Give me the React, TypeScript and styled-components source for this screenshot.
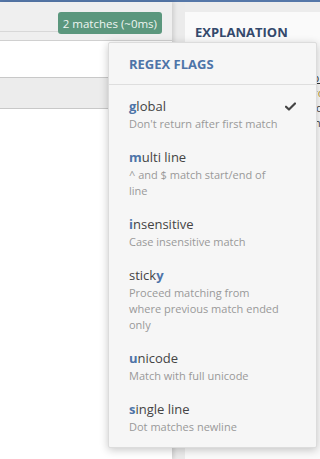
import React from "react";
import styled, { createGlobalStyle } from "styled-components";

const Global = createGlobalStyle`
  html, body { margin: 0; padding: 0; }
  body {
    width: 320px;
    height: 459px;
    overflow: hidden;
    background: #ececec;
    font-family: "Open Sans", "DejaVu Sans", sans-serif;
  }
`;

const Page = styled.div`
  position: relative;
  width: 320px;
  height: 459px;
  display: flex;
  flex-direction: column;
  border-top: 2px solid #5577a8;
  box-sizing: border-box;
`;

const Columns = styled.div`
  flex: 1;
  display: flex;
  min-height: 0;
`;

const LeftPane = styled.div`
  width: 172px;
  display: flex;
  flex-direction: column;
  background: #fff;
  box-shadow: 2px 0 4px rgba(0, 0, 0, 0.12);
  z-index: 1;
`;

const Toolbar = styled.div`
  height: 38px;
  display: flex;
  align-items: flex-start;
  background: #efefef;
  border-bottom: 1px solid #d0d0d0;
  padding-right: 10px;
`;

const ToolbarFill = styled.div`
  flex: 1;
  height: 29px;
  border-bottom: 1px solid #d8d8d8;
`;

const Badge = styled.div`
  margin-top: 10px;
  height: 22px;
  padding: 0 5px;
  display: flex;
  align-items: center;
  background: #5b977d;
  color: #eef5f1;
  font-size: 11.5px;
  border-radius: 3px;
  white-space: nowrap;
`;

const InputRow = styled.div`
  height: 36px;
  background: #fff;
  border-bottom: 1px solid #c8c8c8;
`;

const StripRow = styled.div`
  height: 30px;
  background: #ececec;
  border-bottom: 1px solid #c8c8c8;
`;

const Editor = styled.div`
  flex: 1;
  background: #fff;
`;

const Gutter = styled.div`
  width: 13px;
  background: #ebebeb;
`;

const RightPane = styled.div`
  flex: 1;
  margin-top: 10px;
  background: #fafafa;
  padding: 11px 0 0 10px;
  overflow: hidden;
`;

const Heading = styled.div`
  font-size: 13px;
  font-weight: 700;
  color: #34496c;
`;

const ExplainBlock = styled.div`
  margin-top: 14px;
  padding-left: 20px;
`;

const ExplainLine = styled.div<{ $color: string; $under?: boolean }>`
  font-size: 11px;
  line-height: 15px;
  color: ${(p) => p.$color};
  text-decoration: ${(p) => (p.$under ? "underline" : "none")};
  white-space: nowrap;
`;

const Menu = styled.div`
  position: absolute;
  left: 108px;
  top: 40px;
  width: 209px;
  background: #f6f6f6;
  border: 1px solid #dcdcdc;
  border-radius: 2px;
  box-shadow: 0 2px 8px rgba(0, 0, 0, 0.22);
  box-sizing: border-box;
  z-index: 5;
`;

const MenuHeader = styled.div`
  height: 41px;
  display: flex;
  align-items: center;
  padding: 0 20px;
  font-size: 13px;
  font-weight: 700;
  color: #4d74a8;
  border-bottom: 1px solid #dedede;
`;

const MenuList = styled.div`
  padding: 4px 0 4px;
`;

const Item = styled.div`
  position: relative;
  padding: 7px 33px 8px 20px;
`;

const Title = styled.div`
  font-size: 13px;
  line-height: 20px;
  color: #444;
`;

const Key = styled.b`
  color: #4d74a8;
  font-weight: 700;
`;

const Desc = styled.div`
  font-size: 11px;
  line-height: 16px;
  color: #999;
`;

const Check = styled.svg`
  position: absolute;
  right: 20px;
  top: 13px;
  width: 11px;
  height: 9px;
`;

type Flag = { pre: string; key: string; post: string; desc: string; checked?: boolean };

const flags: Flag[] = [
  { pre: "", key: "g", post: "lobal", desc: "Don't return after first match", checked: true },
  { pre: "", key: "m", post: "ulti line", desc: "^ and $ match start/end of line" },
  { pre: "", key: "i", post: "nsensitive", desc: "Case insensitive match" },
  { pre: "stick", key: "y", post: "", desc: "Proceed matching from where previous match ended only" },
  { pre: "", key: "u", post: "nicode", desc: "Match with full unicode" },
  { pre: "", key: "s", post: "ingle line", desc: "Dot matches newline" },
];

const explain: { t: string; c: string; u?: boolean }[] = [
  { t: "/ (\\w+) / gm", c: "#4d74a8" },
  { t: "1st Capturing Group (\\w+)", c: "#333", u: true },
  { t: "\\w matches any word character", c: "#b8962e" },
  { t: "+ matches the previous token", c: "#444" },
  { t: "between one and unlimited times", c: "#444" },
  { t: "Global pattern flags", c: "#333", u: true },
  { t: "g modifier: global", c: "#b8962e" },
];

export default function App() {
  return (
    <>
      <Global />
      <Page>
        <Columns>
          <LeftPane>
            <Toolbar>
              <ToolbarFill />
              <Badge>2 matches (~0ms)</Badge>
            </Toolbar>
            <InputRow />
            <StripRow />
            <Editor />
          </LeftPane>
          <Gutter />
          <RightPane>
            <Heading>EXPLANATION</Heading>
            <ExplainBlock>
              {explain.map((e, n) => (
                <ExplainLine key={n} $color={e.c} $under={e.u}>
                  {e.t}
                </ExplainLine>
              ))}
            </ExplainBlock>
          </RightPane>
        </Columns>
        <Menu>
          <MenuHeader>REGEX FLAGS</MenuHeader>
          <MenuList>
            {flags.map((f) => (
              <Item key={f.key}>
                <Title>
                  {f.pre}
                  <Key>{f.key}</Key>
                  {f.post}
                </Title>
                <Desc>{f.desc}</Desc>
                {f.checked && (
                  <Check viewBox="0 0 12 10">
                    <path d="M1 5.2 L4.3 8.4 L11 1.6" fill="none" stroke="#444" strokeWidth="2.4" strokeLinecap="round" strokeLinejoin="round" />
                  </Check>
                )}
              </Item>
            ))}
          </MenuList>
        </Menu>
      </Page>
    </>
  );
}
